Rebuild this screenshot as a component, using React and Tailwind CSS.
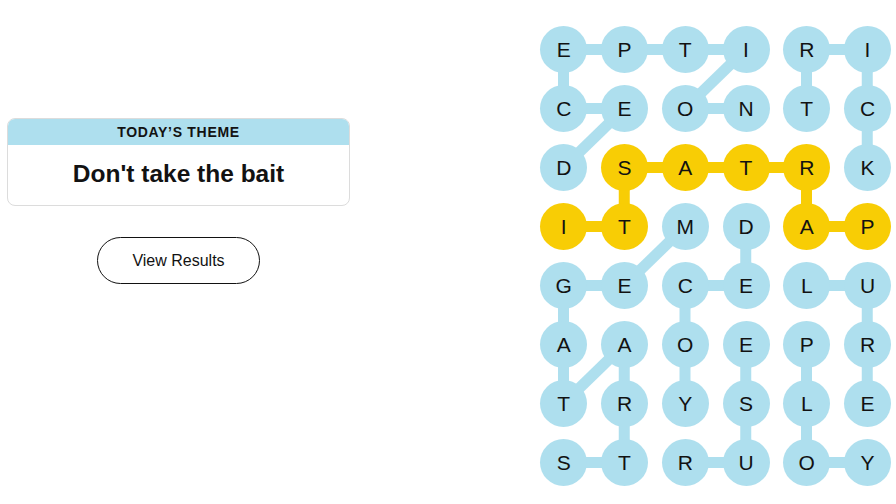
import React from "react";

const LETTERS = ["EPTIRI", "CEONTC", "DSATRK", "ITMDAP", "GECELU", "AAOEPR", "TRYSLE", "STRUOY"];

// spangram cells (row-col)
const GOLD = new Set(["2-1", "2-2", "2-3", "2-4", "3-0", "3-1", "3-4", "3-5"]);

const BLUE_EDGES = [
  [0, 0, 0, 1], [0, 1, 0, 2], [0, 2, 0, 3], [0, 3, 1, 2], [1, 2, 1, 3],
  [0, 0, 1, 0], [1, 0, 1, 1], [1, 1, 2, 0],
  [1, 4, 0, 4], [0, 4, 0, 5], [0, 5, 1, 5], [1, 5, 2, 5],
  [3, 2, 4, 1], [4, 1, 4, 0], [4, 0, 5, 0], [5, 0, 6, 0], [6, 0, 5, 1], [5, 1, 6, 1], [6, 1, 7, 1], [7, 1, 7, 0],
  [3, 3, 4, 3], [4, 3, 4, 2], [4, 2, 5, 2], [5, 2, 6, 2],
  [7, 2, 7, 3], [7, 3, 6, 3], [6, 3, 5, 3],
  [4, 4, 4, 5], [4, 5, 5, 5], [5, 5, 6, 5],
  [5, 4, 6, 4], [6, 4, 7, 4], [7, 4, 7, 5],
];

const GOLD_EDGES = [
  [3, 0, 3, 1], [3, 1, 2, 1], [2, 1, 2, 2], [2, 2, 2, 3], [2, 3, 2, 4], [2, 4, 3, 4], [3, 4, 3, 5],
];

const BLUE = "#aedfee";
const YELLOW = "#f8cd05";

const cx = (c) => 23.5 + c * 60.75;
const cy = (r) => 23.5 + r * 59;

function Board() {
  return (
    <div className="relative">
      {/* connectors under the letters */}
      <svg className="absolute inset-0" width="351" height="460" viewBox="0 0 351 460">
        {BLUE_EDGES.map(([r1, c1, r2, c2], i) => (
          <line key={"b" + i} x1={cx(c1)} y1={cy(r1)} x2={cx(c2)} y2={cy(r2)} stroke={BLUE} strokeWidth="11" />
        ))}
        {GOLD_EDGES.map(([r1, c1, r2, c2], i) => (
          <line key={"g" + i} x1={cx(c1)} y1={cy(r1)} x2={cx(c2)} y2={cy(r2)} stroke={YELLOW} strokeWidth="11" />
        ))}
      </svg>
      <div className="relative grid grid-cols-[repeat(6,47px)] gap-x-[13.75px] gap-y-[12px]">
        {LETTERS.map((row, r) =>
          row.split("").map((ch, c) => (
            <div
              key={r + "-" + c}
              className={`flex h-[47px] w-[47px] items-center justify-center rounded-full text-[21px] text-[#121212] ${
                GOLD.has(r + "-" + c) ? "bg-[#f8cd05]" : "bg-[#aedfee]"
              }`}
            >
              {ch}
            </div>
          ))
        )}
      </div>
    </div>
  );
}

export default function App() {
  return (
    <div className="flex h-[504px] w-[896px] bg-white font-['Liberation_Sans',Arial,sans-serif] text-[#121212]">
      <div className="ml-[7px] mt-[118px] flex w-[343px] flex-col items-center">
        <div className="w-full overflow-hidden rounded-lg border border-[#dcdcdc]">
          <div className="flex h-[26px] items-center justify-center bg-[#aedfee] text-[14px] font-bold uppercase tracking-[0.7px]">
            Today’s Theme
          </div>
          <div className="flex h-[60px] items-center justify-center pb-[2px] text-[24.5px] font-bold">
            Don't take the bait
          </div>
        </div>
        <button className="mt-[31px] h-[47px] w-[163px] rounded-full border border-[#121212] text-[16px]">
          View Results
        </button>
      </div>
      <div className="ml-auto mr-[5px] mt-[26px]">
        <Board />
      </div>
    </div>
  );
}
